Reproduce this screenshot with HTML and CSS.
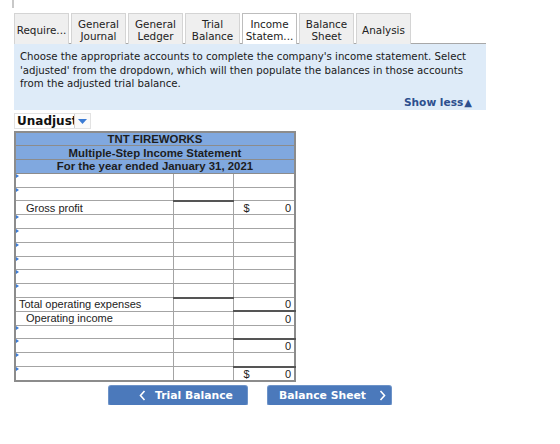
FILE: index.html
```html
<!DOCTYPE html>
<html lang="en">
<head>
    <meta charset="UTF-8">
    <title>Income Statement</title>
    <link rel="stylesheet" href="styles.css">
</head>
<body>
    <div class="page">
        <div class="top-stub"></div>

        <div class="tabs">
            <div class="tab">Require...</div>
            <div class="tab">General<br>Journal</div>
            <div class="tab">General<br>Ledger</div>
            <div class="tab">Trial<br>Balance</div>
            <div class="tab active">Income<br>Statem...</div>
            <div class="tab">Balance<br>Sheet</div>
            <div class="tab">Analysis</div>
        </div>

        <div class="panel">
            <p>Choose the appropriate accounts to complete the company's income statement. Select 'adjusted' from the dropdown, which will then populate the balances in those accounts from the adjusted trial balance.</p>
            <div class="show-less">Show less<span class="tri">&#9650;</span></div>
        </div>

        <div class="select">
            <span class="select-text">Unadjusted</span>
            <span class="select-btn"><svg width="9" height="5" viewBox="0 0 9 5"><polygon points="0,0 9,0 4.5,5" fill="#3b7bd4"/></svg></span>
        </div>

        <table class="stmt">
            <colgroup>
                <col class="c1">
                <col class="c2">
                <col class="c3">
            </colgroup>
            <tr class="head"><td colspan="3">TNT FIREWORKS</td></tr>
            <tr class="head"><td colspan="3">Multiple-Step Income Statement</td></tr>
            <tr class="head"><td colspan="3">For the year ended January 31, 2021</td></tr>
            <tr><td class="lbl pick"></td><td></td><td></td></tr>
            <tr><td class="lbl pick"></td><td></td><td></td></tr>
            <tr><td class="lbl ind">Gross profit</td><td class="line"></td><td class="amt"><span>$</span>0</td></tr>
            <tr><td class="lbl pick"></td><td></td><td></td></tr>
            <tr><td class="lbl pick"></td><td></td><td></td></tr>
            <tr><td class="lbl pick"></td><td></td><td></td></tr>
            <tr><td class="lbl pick"></td><td></td><td></td></tr>
            <tr><td class="lbl pick"></td><td></td><td></td></tr>
            <tr><td class="lbl pick"></td><td></td><td></td></tr>
            <tr><td class="lbl">Total operating expenses</td><td class="line"></td><td class="amt">0</td></tr>
            <tr><td class="lbl ind">Operating income</td><td></td><td class="amt line">0</td></tr>
            <tr><td class="lbl pick"></td><td></td><td></td></tr>
            <tr><td class="lbl pick"></td><td></td><td class="amt line">0</td></tr>
            <tr><td class="lbl pick"></td><td></td><td></td></tr>
            <tr><td class="lbl pick"></td><td></td><td class="amt line"><span>$</span>0</td></tr>
        </table>

        <div class="nav">
            <button class="nav-btn prev">
                <svg class="chev" width="7" height="11" viewBox="0 0 7 11"><polyline points="5.5,1 1.5,5.5 5.5,10" fill="none" stroke="#fff" stroke-width="1.6"/></svg>
                Trial Balance
            </button>
            <button class="nav-btn next">
                Balance Sheet
                <svg class="chev" width="7" height="11" viewBox="0 0 7 11"><polyline points="1.5,1 5.5,5.5 1.5,10" fill="none" stroke="#fff" stroke-width="1.6"/></svg>
            </button>
        </div>
    </div>
</body>
</html>
```

FILE: styles.css
```css
* {
    margin: 0;
    padding: 0;
    box-sizing: border-box;
}

body {
    font-family: 'DejaVu Sans', Verdana, sans-serif;
    background: #fff;
    color: #222;
}

.page {
    padding-left: 14px;
    width: 560px;
}

.top-stub {
    width: 2px;
    height: 8px;
    margin-left: -2px;
    background: #c8c8c8;
}

.tabs {
    display: flex;
    gap: 2px;
    margin-top: 5px;
    position: relative;
    z-index: 1;
}

.tab {
    width: 55px;
    height: 31px;
    background: #efefef;
    border: 1px solid #d4d4d4;
    border-bottom: none;
    display: flex;
    align-items: center;
    justify-content: center;
    text-align: center;
    font-size: 10.4px;
    line-height: 12px;
    padding-top: 2px;
    color: #222;
    white-space: nowrap;
}

.tab.active {
    background: #fff;
    border-color: #bdbdbd;
}

.panel {
    width: 472px;
    height: 67px;
    margin-top: -1px;
    background: #deebf8;
    border-top: 1px solid #a8a8a8;
    padding: 6px 8px 0 6px;
    font-size: 10.2px;
    line-height: 13.5px;
    color: #1a1a1a;
}

.show-less {
    text-align: right;
    font-weight: bold;
    color: #2d4f8e;
    font-size: 10.6px;
    margin-top: 5px;
    padding-right: 6px;
}

.tri {
    font-size: 10px;
    margin-left: 1px;
}

.select {
    display: flex;
    width: 77px;
    height: 16px;
    margin-top: 3px;
    border: 1px solid #e2e2e2;
    overflow: hidden;
}

.select-text {
    width: 60px;
    overflow: hidden;
    white-space: nowrap;
    font-size: 12px;
    font-weight: bold;
    line-height: 15px;
    padding-left: 2px;
    color: #111;
}

.select-btn {
    width: 16px;
    display: flex;
    align-items: center;
    justify-content: center;
    border-left: 1px solid #d0d0d0;
    background: #fafafa;
}

.stmt {
    margin-top: 2px;
    width: 282px;
    border-collapse: collapse;
    border: 2px solid #8c8c8c;
    font-family: 'Liberation Sans', Arial, sans-serif;
    font-size: 11px;
    table-layout: fixed;
}

.stmt .c2 {
    width: 60px;
}

.stmt .c3 {
    width: 61px;
}

.stmt td {
    height: 13.8px;
    padding: 0 3px;
    border: 1px solid #a4a4a4;
    line-height: 12px;
    white-space: nowrap;
}

.stmt .head td {
    background: #80a8df;
    text-align: center;
    font-weight: bold;
    font-size: 11.4px;
    color: #1d1d1d;
    border-color: #8c8c8c;
}

.stmt .lbl {
    position: relative;
}

.stmt .ind {
    padding-left: 10px;
}

.stmt .pick::before {
    content: "";
    position: absolute;
    left: 0;
    top: 0;
    border-left: 3px solid #3b7bd4;
    border-top: 2px solid transparent;
    border-bottom: 2px solid transparent;
}

.stmt .line {
    border-top: 2px solid #555;
}

.stmt .amt {
    text-align: right;
    padding-right: 3px;
}

.stmt .amt span {
    float: left;
    padding-left: 6px;
}

.nav {
    display: flex;
    gap: 21px;
    margin-top: 4px;
    margin-left: 95px;
}

.nav-btn {
    height: 19px;
    border: none;
    border-radius: 2px;
    background: #4b79bb;
    color: #fff;
    font-family: 'DejaVu Sans', Verdana, sans-serif;
    font-weight: bold;
    font-size: 10.8px;
    display: flex;
    align-items: center;
    justify-content: center;
    box-shadow: 0 0 0 1px #6d93c8;
}

.nav-btn.prev {
    width: 138px;
    gap: 9px;
    padding-left: 16px;
}

.nav-btn.next {
    width: 123px;
    gap: 13px;
    padding-left: 6px;
}
```
